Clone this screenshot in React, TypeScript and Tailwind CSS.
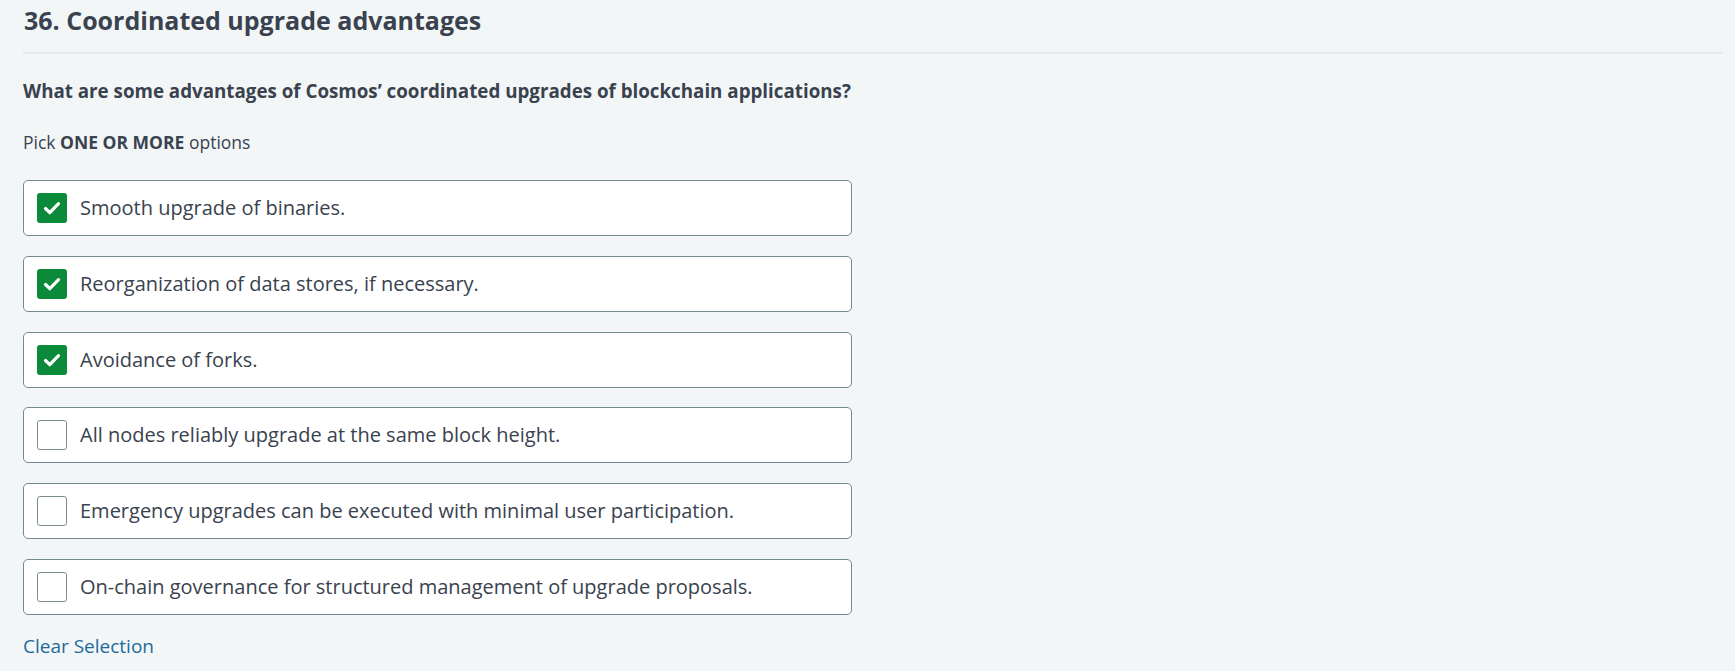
const options = [
  { label: "Smooth upgrade of binaries.", checked: true },
  { label: "Reorganization of data stores, if necessary.", checked: true },
  { label: "Avoidance of forks.", checked: true },
  { label: "All nodes reliably upgrade at the same block height.", checked: false },
  { label: "Emergency upgrades can be executed with minimal user participation.", checked: false },
  { label: "On-chain governance for structured management of upgrade proposals.", checked: false },
];

function Checkbox({ checked }: { checked: boolean }) {
  if (checked) {
    return (
      <span className="flex h-[30px] w-[30px] shrink-0 items-center justify-center rounded-[3px] bg-[#0b8a3a]">
        <svg width="30" height="30" viewBox="0 0 30 30" fill="none">
          <path d="M8.5 15.5l4.3 4.2 8.7-9" stroke="#fff" strokeWidth="3.2" strokeLinecap="round" strokeLinejoin="round" />
        </svg>
      </span>
    );
  }
  return <span className="h-[30px] w-[30px] shrink-0 rounded-[3px] border border-[#7d8e92] bg-white" />;
}

export default function App() {
  return (
    <div className="min-h-[671px] bg-[#f3f6f7] pl-[23px] pr-[13px] pt-[2px] text-[#39424e] font-['Open_Sans',sans-serif]">
      <h1 className="text-[25px] font-bold leading-[36px] pl-px">36. Coordinated upgrade advantages</h1>
      <div className="mt-[14px] h-[2px] bg-[#e4eaec]" />
      <p className="mt-[24px] text-[18.75px] font-bold leading-[26px]">
        What are some advantages of Cosmos’ coordinated upgrades of blockchain applications?
      </p>
      <p className="mt-[25px] text-[17.5px] leading-[26px]">
        Pick <span className="font-bold">ONE OR MORE</span> options
      </p>
      <div className="mt-[25px] flex w-[829px] flex-col gap-[19.8px]">
        {options.map((o) => (
          <label
            key={o.label}
            className="flex h-[56px] items-center gap-[13px] rounded-[5px] border border-[#728a8e] bg-white pl-[13px]"
          >
            <Checkbox checked={o.checked} />
            <span className="text-[20px] leading-[28px]">{o.label}</span>
          </label>
        ))}
      </div>
      <button className="mt-[18px] text-[19px] leading-[26px] text-[#1c6b9b]">Clear Selection</button>
    </div>
  );
}
